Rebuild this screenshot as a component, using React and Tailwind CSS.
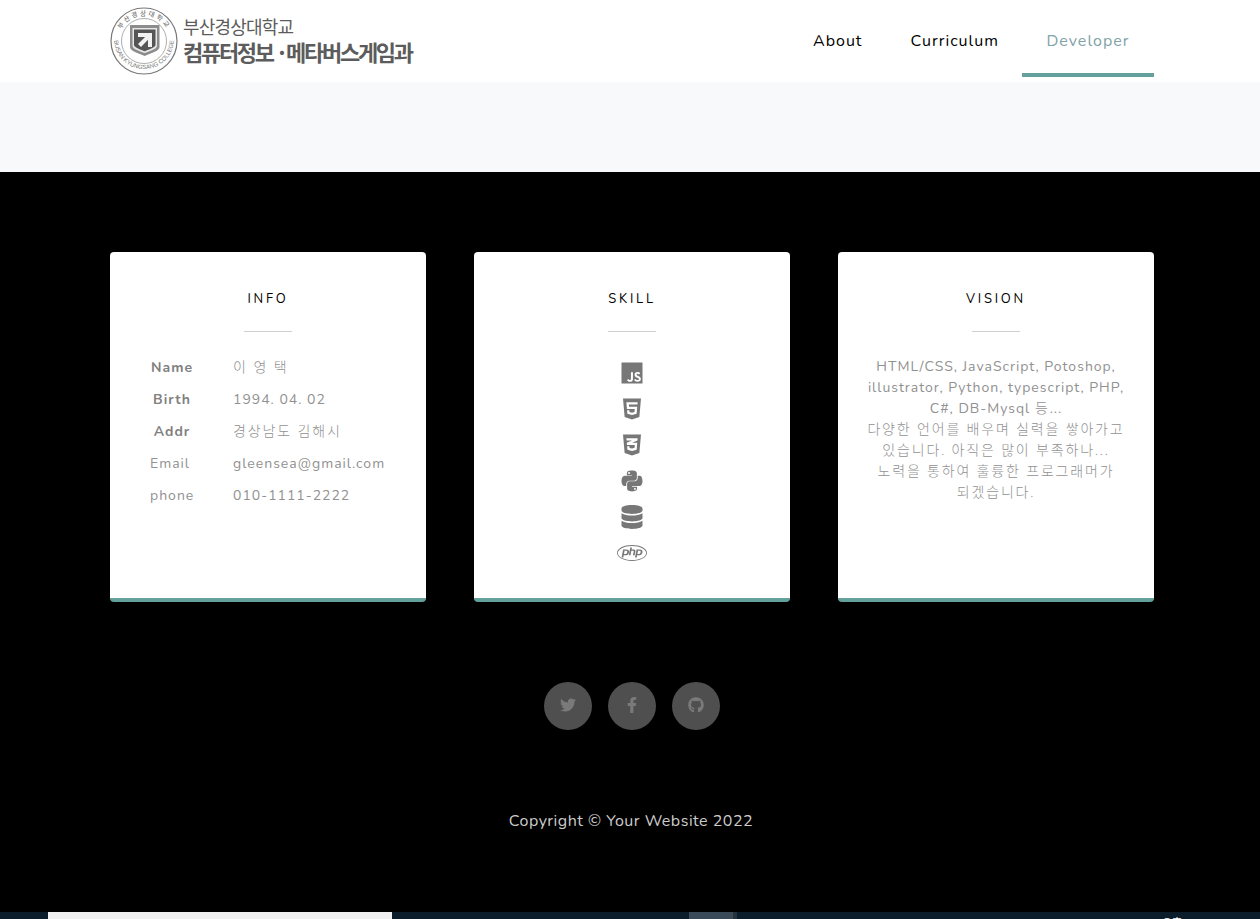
import { FaCss3Alt, FaDatabase, FaFacebookF, FaGithub, FaHtml5, FaJs, FaPhp, FaPython, FaTwitter } from 'react-icons/fa'

const font = "font-['Nunito','Lato','Noto_Sans','Noto_Sans_CJK_KR',sans-serif]"

function Seal() {
  return (
    <svg width="68" height="68" viewBox="0 0 68 68" className="shrink-0">
      <defs>
        <path id="sealTop" d="M 8.5 34 A 25.5 25.5 0 0 1 59.5 34" />
        <path id="sealBottom" d="M 4 32 A 30 30 0 0 0 64 32" />
      </defs>
      <circle cx="34" cy="34" r="33" fill="none" stroke="#777" strokeWidth="1.2" />
      <circle cx="34" cy="34" r="22.5" fill="none" stroke="#999" strokeWidth="0.8" />
      <text fontSize="6.5" fontWeight="500" fill="#777" fontFamily="'Noto Sans CJK KR',sans-serif">
        <textPath href="#sealTop" startOffset="50%" textAnchor="middle" letterSpacing="2">부산경상대학교</textPath>
      </text>
      <text fontSize="6" fill="#777" fontFamily="'Liberation Sans',sans-serif">
        <textPath href="#sealBottom" startOffset="50%" textAnchor="middle">BUSAN KYUNGSANG COLLEGE</textPath>
      </text>
      <g transform="translate(0.5 -2)">
        <path d="M19.5 20 H49 V42 C49 46 40 48.5 34.2 51 C28 48.5 19.5 46 19.5 42 Z" fill="#8c8c8c" />
        <path d="M22 23 H46.5 V41 C46.5 44 38 46.5 34.2 48 C30 46.5 22 44 22 41 Z" fill="#e6e6e6" />
        <path d="M23.5 24.5 H45 V40 C45 42.5 37 45 34.2 46.3 C31 45 23.5 42.5 23.5 40 Z" fill="#555" />
        <path d="M27.5 28 H41.5 V42 H37.5 V34.8 L30.5 42 L27.5 39 L34.6 32 H27.5 Z" fill="#f2f2f2" />
      </g>
    </svg>
  )
}

function Logo() {
  return (
    <div className="flex items-start">
      <Seal />
      <div className="ml-[5px] mt-[8px] font-['Noto_Sans_CJK_KR',sans-serif] text-[#5c5c5c]">
        <div className="text-[18px] leading-[22px] tracking-[-0.8px]">부산경상대학교</div>
        <div className="mt-[2px] text-[22px] leading-[24px] font-bold tracking-[-2.3px] whitespace-nowrap">컴퓨터정보 ·메타버스게임과</div>
      </div>
    </div>
  )
}

function NavLink({ children, className }) {
  return (
    <a className={`block h-[77px] pl-6 pt-[29px] text-[16px] leading-[24px] tracking-[1px] border-b-4 ${className}`}>
      {children}
    </a>
  )
}

function Card({ title, children }) {
  return (
    <div className="h-[350px] bg-white rounded-[4px] border-b-4 border-[#64a19d] pt-[38px]">
      <h4 className="text-center text-[13px] leading-[19px] tracking-[2.8px] text-black uppercase font-normal">{title}</h4>
      <hr className="w-12 mx-auto mt-[22px] mb-[24px] border-t border-[#cfcfcf]" />
      {children}
    </div>
  )
}

const info = [
  ['Name', <span className="tracking-[2px] font-light">이 영 택</span>, true],
  ['Birth', '1994. 04. 02', true],
  ['Addr', <span className="tracking-[1.9px] font-light">경상남도 김해시</span>, true],
  ['Email', 'gleensea@gmail.com', false],
  ['phone', '010-1111-2222', false],
]

const skills = [
  [FaJs, 24],
  [FaHtml5, 24],
  [FaCss3Alt, 24],
  [FaPython, 24],
  [FaDatabase, 24],
  [FaPhp, 30],
]

function InfoCard() {
  return (
    <Card title="Info">
      <div className="pl-10 mt-[-5px] text-[14px] tracking-[1px] text-[#919191]">
        {info.map(([label, value, bold]) => (
          <div key={label} className="flex h-8 items-center">
            <div className={`w-[44px] whitespace-nowrap ${bold ? 'text-center font-bold text-[#808080]' : ''}`}>{label}</div>
            <div className="ml-[39px] whitespace-nowrap">{value}</div>
          </div>
        ))}
      </div>
    </Card>
  )
}

function SkillCard() {
  return (
    <Card title="Skill">
      <div className="flex flex-col items-center text-[#777] mt-[-1px]">
        {skills.map(([Icon, size], i) => (
          <div key={i} className="h-9 flex items-center justify-center">
            <Icon size={size} />
          </div>
        ))}
      </div>
    </Card>
  )
}

function Ko({ children }) {
  return <span className="tracking-[1.85px] font-light">{children}</span>
}

function VisionCard() {
  return (
    <Card title="Vision">
      <p className="text-center text-[14px] leading-[21px] tracking-[1px] text-[#919191] whitespace-nowrap">
        HTML/CSS, JavaScript, Potoshop,
        <br />
        illustrator, Python, typescript, PHP,
        <br />
        C#, DB-Mysql <Ko>등</Ko>...
        <br />
        <Ko>다양한 언어를 배우며 실력을 쌓아가고</Ko>
        <br />
        <Ko>있습니다. 아직은 많이 부족하나...</Ko>
        <br />
        <Ko>노력을 통하여 훌륭한 프로그래머가</Ko>
        <br />
        <Ko>되겠습니다.</Ko>
      </p>
    </Card>
  )
}

function Social({ children }) {
  return (
    <a className="w-12 h-12 rounded-full bg-[#4f4f4f] text-[#7a7a7a] flex items-center justify-center pb-[2px]">
      {children}
    </a>
  )
}

export default function App() {
  return (
    <div className={`h-[919px] overflow-hidden flex flex-col bg-black ${font}`}>
      <header className="h-[82px] bg-white pl-[110px] pr-[106px] flex justify-between items-start shrink-0">
        <div className="pt-[7px]"><Logo /></div>
        <nav className="flex">
          <NavLink className="pr-6 text-black border-transparent">About</NavLink>
          <NavLink className="pr-[23px] text-black border-transparent">Curriculum</NavLink>
          <NavLink className="w-[132px] pr-6 text-center text-[#7fa3a6] border-[#64a19d]">Developer</NavLink>
        </nav>
      </header>
      <div className="h-[90px] bg-[#f8f9fa] shrink-0" />
      <main className="h-[740px] shrink-0 bg-black pt-20 pl-[110px] pr-[106px]">
        <div className="grid grid-cols-3 gap-12">
          <InfoCard />
          <SkillCard />
          <VisionCard />
        </div>
        <div className="flex justify-center gap-4 mt-20">
          <Social><FaTwitter size={16} /></Social>
          <Social><FaFacebookF size={16} /></Social>
          <Social><FaGithub size={16} /></Social>
        </div>
        <p className="mt-[79px] pr-[2px] text-center text-[16px] leading-[24px] tracking-[0.5px] text-[#cccccc]">Copyright © Your Website 2022</p>
      </main>
      <div className="h-[7px] bg-[#0b1d2b] flex overflow-hidden relative shrink-0">
        <div className="w-[48px]" />
        <div className="w-[344px] bg-[#f0f0f0]" />
        <div className="w-[297px]" />
        <div className="w-[44px] bg-[#3a4a58]" />
        <div className="w-[4px] bg-[#26333f]" />
        <div className="ml-auto w-[98px] pt-[3px] text-[11px] leading-[14px] text-white font-['Noto_Sans_CJK_KR',sans-serif] whitespace-nowrap">오후 4:02</div>
      </div>
    </div>
  )
}
